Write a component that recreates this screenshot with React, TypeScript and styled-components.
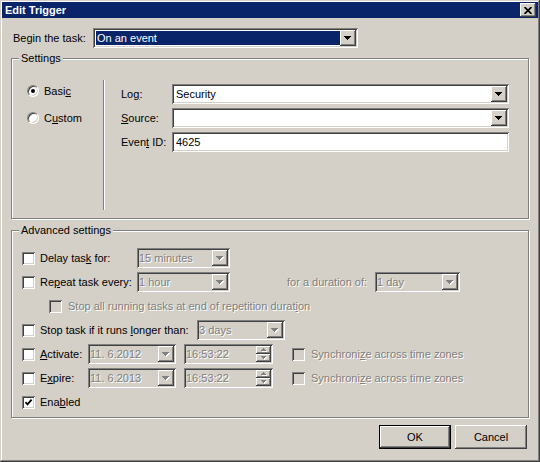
import styled, { createGlobalStyle, css } from "styled-components";

const GlobalStyle = createGlobalStyle`
  html, body {
    margin: 0;
    padding: 0;
    background: #d4d0c8;
  }
  body {
    font-family: "Liberation Sans", Arial, sans-serif;
    font-size: 11px;
    color: #000;
  }
  * {
    box-sizing: border-box;
  }
`;

const raised = css`
  background: #d4d0c8;
  box-shadow: inset -1px -1px 0 #404040, inset 1px 1px 0 #fff,
    inset -2px -2px 0 #808080, inset 2px 2px 0 #d4d0c8;
`;

const sunken = css`
  box-shadow: inset 1px 1px 0 #808080, inset -1px -1px 0 #fff,
    inset 2px 2px 0 #404040, inset -2px -2px 0 #d4d0c8;
`;

const Window = styled.div`
  width: 540px;
  height: 462px;
  padding: 2px;
  background: #d4d0c8;
  box-shadow: inset -1px -1px 0 #404040, inset 1px 1px 0 #d4d0c8,
    inset -2px -2px 0 #808080, inset 2px 2px 0 #fff;
  display: flex;
  flex-direction: column;
`;

const TitleBar = styled.div`
  height: 16px;
  background: #0a246a;
  color: #fff;
  font-weight: bold;
  display: flex;
  align-items: center;
  justify-content: space-between;
  padding: 0 2px 0 3px;
`;

const CloseButton = styled.div`
  ${raised};
  width: 16px;
  height: 14px;
  display: flex;
  align-items: center;
  justify-content: center;
`;

const Content = styled.div`
  padding: 10px 9px 0 9px;
  display: flex;
  flex-direction: column;
`;

const Row = styled.div<{ $indent?: number }>`
  display: flex;
  align-items: center;
  height: 20px;
  padding-left: ${(p) => p.$indent ?? 0}px;
`;

const Label = styled.span<{ $w?: number; $disabled?: boolean; $left?: number }>`
  width: ${(p) => (p.$w ? `${p.$w}px` : "auto")};
  flex-shrink: 0;
  white-space: nowrap;
  margin-left: ${(p) => p.$left ?? 0}px;
  ${(p) =>
    p.$disabled &&
    css`
      color: #808080;
      text-shadow: 1px 1px 0 #fff;
    `}
`;

const Key = styled.u`
  text-decoration: underline;
`;

const Field = styled.div<{ $w: number; $disabled?: boolean; $left?: number }>`
  ${sunken};
  width: ${(p) => p.$w}px;
  height: 20px;
  flex-shrink: 0;
  margin-left: ${(p) => p.$left ?? 0}px;
  background: ${(p) => (p.$disabled ? "#d4d0c8" : "#fff")};
  color: ${(p) => (p.$disabled ? "#808080" : "#000")};
  text-shadow: ${(p) => (p.$disabled ? "1px 1px 0 #fff" : "none")};
  display: flex;
  align-items: stretch;
  padding: 2px;
`;

const FieldText = styled.div<{ $selected?: boolean; $tight?: boolean }>`
  flex: 1;
  display: flex;
  align-items: center;
  padding-left: ${(p) => (p.$tight ? 0 : 2)}px;
  white-space: nowrap;
  overflow: hidden;
  ${(p) =>
    p.$selected &&
    css`
      background: #0a246a;
      color: #fff;
      margin: 1px 0 1px 1px;
      padding-left: 1px;
    `}
`;

const DropButton = styled.div`
  ${raised};
  width: 16px;
  height: 16px;
  display: flex;
  align-items: center;
  justify-content: center;
`;

const SpinColumn = styled.div`
  width: 15px;
  display: flex;
  flex-direction: column;
`;

const SpinButton = styled.div`
  ${raised};
  height: 8px;
  display: flex;
  align-items: center;
  justify-content: center;
`;

const Group = styled.div<{ $h: number; $top: number }>`
  position: relative;
  height: ${(p) => p.$h}px;
  margin-top: ${(p) => p.$top}px;
  border: 1px solid #808080;
  box-shadow: inset 1px 1px 0 #fff, 1px 1px 0 #fff;
`;

const Caption = styled.span`
  position: absolute;
  top: -7px;
  left: 7px;
  padding: 0 2px;
  line-height: 13px;
  background: #d4d0c8;
`;

const SettingsBody = styled.div`
  display: flex;
  height: 100%;
  padding: 21px 0 8px 0;
`;

const RadioColumn = styled.div`
  width: 91px;
  padding: 3px 0 0 15px;
  display: flex;
  flex-direction: column;
  gap: 11px;
`;

const RadioRow = styled.div`
  display: flex;
  align-items: center;
  gap: 5px;
  height: 16px;
`;

const RadioCircle = styled.span<{ $on?: boolean }>`
  width: 12px;
  height: 12px;
  border-radius: 50%;
  background: #fff;
  border: 1px solid;
  border-color: #808080 #fff #fff #808080;
  box-shadow: inset 1px 1px 0 #404040, inset -1px -1px 0 #d4d0c8;
  display: flex;
  align-items: center;
  justify-content: center;
  &::after {
    content: "";
    display: ${(p) => (p.$on ? "block" : "none")};
    width: 4px;
    height: 4px;
    border-radius: 50%;
    background: #000;
  }
`;

const Separator = styled.div`
  width: 2px;
  border-left: 1px solid #808080;
  border-right: 1px solid #fff;
`;

const FieldColumn = styled.div`
  padding: 4px 0 0 16px;
  display: flex;
  flex-direction: column;
  gap: 4px;
`;

const AdvancedBody = styled.div`
  padding: 17px 0 0 10px;
  display: flex;
  flex-direction: column;
  gap: 4px;
`;

const CheckBox = styled.span<{ $disabled?: boolean; $gap?: number }>`
  width: 13px;
  height: 13px;
  flex-shrink: 0;
  margin-right: ${(p) => p.$gap ?? 5}px;
  background: ${(p) => (p.$disabled ? "#d4d0c8" : "#fff")};
  ${sunken};
  display: flex;
  align-items: center;
  justify-content: center;
`;

const ButtonRow = styled.div`
  display: flex;
  justify-content: flex-end;
  gap: 4px;
  margin-top: 7px;
  padding-right: 2px;
`;

const Button = styled.div<{ $default?: boolean }>`
  width: 72px;
  height: 24px;
  display: flex;
  align-items: center;
  justify-content: center;
  ${(p) =>
    p.$default
      ? css`
          border: 1px solid #000;
          background: #d4d0c8;
          box-shadow: inset -1px -1px 0 #404040, inset 1px 1px 0 #fff,
            inset -2px -2px 0 #808080;
        `
      : raised};
`;

function Arrow({ disabled, small }: { disabled?: boolean; small?: boolean }) {
  const d = small
    ? "M0 0h5v1h-1v1h-1v1h-1v-1h-1v-1h-1z"
    : "M0 0h7v1h-1v1h-1v1h-1v1h-1v-1h-1v-1h-1v-1h-1z";
  const w = small ? 5 : 7;
  const h = small ? 3 : 4;
  return (
    <svg width={w + 1} height={h + 1} viewBox={`0 0 ${w + 1} ${h + 1}`} shapeRendering="crispEdges">
      {disabled && <path d={d} fill="#fff" transform="translate(1 1)" />}
      <path d={d} fill={disabled ? "#808080" : "#000"} />
    </svg>
  );
}

function UpArrow({ disabled }: { disabled?: boolean }) {
  const d = "M2 0h1v1h1v1h1v1h-5v-1h1v-1h1z";
  return (
    <svg width={6} height={4} viewBox="0 0 6 4" shapeRendering="crispEdges">
      {disabled && <path d={d} fill="#fff" transform="translate(1 1)" />}
      <path d={d} fill={disabled ? "#808080" : "#000"} />
    </svg>
  );
}

function Combo({
  w,
  value,
  disabled,
  selected,
  left,
}: {
  w: number;
  value: string;
  disabled?: boolean;
  selected?: boolean;
  left?: number;
}) {
  return (
    <Field $w={w} $disabled={disabled} $left={left}>
      <FieldText $selected={selected} $tight={disabled}>
        {value}
      </FieldText>
      <DropButton>
        <Arrow disabled={disabled} />
      </DropButton>
    </Field>
  );
}

function TimeSpin({ value }: { value: string }) {
  return (
    <Field $w={89} $disabled $left={8}>
      <FieldText $tight>{value}</FieldText>
      <SpinColumn>
        <SpinButton>
          <UpArrow disabled />
        </SpinButton>
        <SpinButton>
          <Arrow disabled small />
        </SpinButton>
      </SpinColumn>
    </Field>
  );
}

function Check({ checked, disabled, gap }: { checked?: boolean; disabled?: boolean; gap?: number }) {
  return (
    <CheckBox $disabled={disabled} $gap={gap}>
      {checked && (
        <svg width="9" height="9" viewBox="0 0 9 9">
          <path d="M1.5 4.2 L3.5 6.4 L7.6 1.6" fill="none" stroke="#000" strokeWidth="1.8" />
        </svg>
      )}
    </CheckBox>
  );
}

export default function App() {
  return (
    <>
      <GlobalStyle />
      <Window>
        <TitleBar>
          <span>Edit Trigger</span>
          <CloseButton>
            <svg width="8" height="7" viewBox="0 0 8 7">
              <path d="M0.5 0 L7.5 7 M7.5 0 L0.5 7" stroke="#000" strokeWidth="1.7" />
            </svg>
          </CloseButton>
        </TitleBar>
        <Content>
          <Row $indent={2}>
            <Label $w={80}>Begin the task:</Label>
            <Combo w={265} value="On an event" selected />
          </Row>

          <Group $h={161} $top={10}>
            <Caption>Settings</Caption>
            <SettingsBody>
              <RadioColumn>
                <RadioRow>
                  <RadioCircle $on />
                  <span>
                    Basi<Key>c</Key>
                  </span>
                </RadioRow>
                <RadioRow>
                  <RadioCircle />
                  <span>
                    C<Key>u</Key>stom
                  </span>
                </RadioRow>
              </RadioColumn>
              <Separator />
              <FieldColumn>
                <Row>
                  <Label $w={51}>
                    Lo<Key>g</Key>:
                  </Label>
                  <Combo w={337} value="Security" />
                </Row>
                <Row>
                  <Label $w={51}>
                    <Key>S</Key>ource:
                  </Label>
                  <Combo w={337} value="" />
                </Row>
                <Row>
                  <Label $w={51}>
                    Even<Key>t</Key> ID:
                  </Label>
                  <Field $w={337}>
                    <FieldText>4625</FieldText>
                  </Field>
                </Row>
              </FieldColumn>
            </SettingsBody>
          </Group>

          <Group $h={188} $top={11}>
            <Caption>Advanced settings</Caption>
            <AdvancedBody>
              <Row>
                <Check />
                <Label $w={97}>
                  Delay tas<Key>k</Key> for:
                </Label>
                <Combo w={93} value="15 minutes" disabled />
              </Row>
              <Row>
                <Check />
                <Label $w={97}>
                  Re<Key>p</Key>eat task every:
                </Label>
                <Combo w={93} value="1 hour" disabled />
                <Label $w={88} $left={57} $disabled>
                  for a duration of:
                </Label>
                <Combo w={85} value="1 day" disabled />
              </Row>
              <Row $indent={27}>
                <Check disabled gap={6} />
                <Label $disabled>
                  Stop all running tasks at end of repetition durat<Key>i</Key>on
                </Label>
              </Row>
              <Row>
                <Check />
                <Label $w={157}>
                  Stop task if it runs <Key>l</Key>onger than:
                </Label>
                <Combo w={88} value="3 days" disabled />
              </Row>
              <Row>
                <Check />
                <Label $w={48}>
                  <Key>A</Key>ctivate:
                </Label>
                <Combo w={88} value="11.  6.2012" disabled />
                <TimeSpin value="16:53:22" />
                <Label $left={19}>
                  <Check disabled gap={6} />
                </Label>
                <Label $disabled>
                  Synchroni<Key>z</Key>e across time zones
                </Label>
              </Row>
              <Row>
                <Check />
                <Label $w={48}>
                  E<Key>x</Key>pire:
                </Label>
                <Combo w={88} value="11.  6.2013" disabled />
                <TimeSpin value="16:53:22" />
                <Label $left={19}>
                  <Check disabled gap={6} />
                </Label>
                <Label $disabled>
                  Synchroni<Key>z</Key>e across time zones
                </Label>
              </Row>
              <Row>
                <Check checked />
                <Label>
                  Ena<Key>b</Key>led
                </Label>
              </Row>
            </AdvancedBody>
          </Group>

          <ButtonRow>
            <Button $default>OK</Button>
            <Button>Cancel</Button>
          </ButtonRow>
        </Content>
      </Window>
    </>
  );
}
